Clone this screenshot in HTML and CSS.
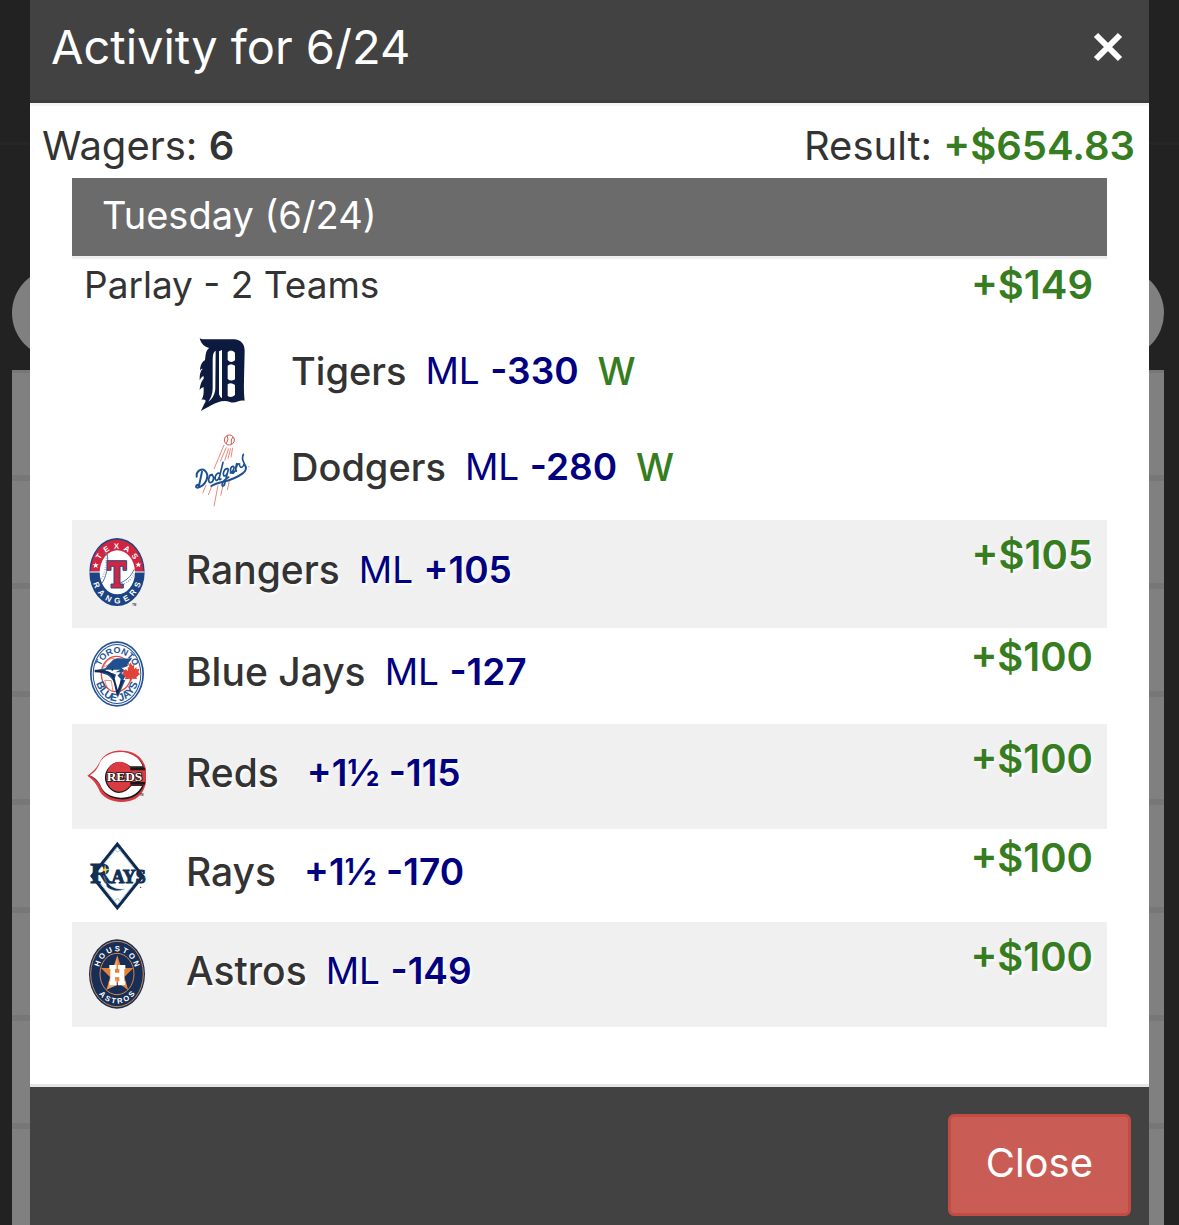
FILE: index.html
```html
<!DOCTYPE html>
<html lang="en">
<head>
<meta charset="utf-8">
<meta name="viewport" content="width=device-width, initial-scale=1">
<title>Activity for 6/24</title>
<link rel="stylesheet" href="styles.css">
</head>
<body>
<div class="backdrop" aria-hidden="true">
  <div class="backdrop-bar"></div>
  <div class="backdrop-pill"></div>
  <div class="backdrop-list"></div>
</div>

<div class="modal" role="dialog" aria-labelledby="modal-title">
  <header class="modal-header">
    <h1 class="modal-title" id="modal-title">Activity for 6/24</h1>
    <button class="dismiss" type="button" aria-label="Dismiss">
      <svg viewBox="0 0 30 30" width="30" height="30"><path d="M3 3 27 27M27 3 3 27" stroke="#fff" stroke-width="6" fill="none"/></svg>
    </button>
  </header>

  <main class="modal-body">
    <div class="summary">
      <div>Wagers: <b>6</b></div>
      <div>Result: <b class="win">+$654.83</b></div>
    </div>

    <section class="day">
      <h2 class="day-title">Tuesday (6/24)</h2>
      <ul class="wagers">
        <li class="parlay">
          <div class="parlay-head"><span class="parlay-name">Parlay - 2 Teams</span><span class="amount">+$149</span></div>
          <ul class="legs">
            <li class="leg">
              <svg class="logo" viewBox="36 -12 180 270" width="60" height="90" role="img" aria-label="Tigers">
                <path fill="#0c1a40" fill-rule="evenodd" d="M59 24C66 30 74 27 84 28L164 28C184 30 194 44 194 62L192 150Q191 190 194 212C178 208 166 222 150 216C130 209 114 216 94 226L62 243C69 233 70 225 76 216C79 211 75 207 64 209C72 200 71 186 71 172C66 172 62 176 59 180C60 163 66 151 71 146V139C66 139 62 144 59 151C59 133 61 123 68 117C65 115 62 119 60 122C61 106 66 95 75 91C77 72 78 60 88 54C76 52 62 42 59 24ZM107 62C98 67 99 79 98 92V174C98 190 94 203 85 215C98 207 105 190 106 176ZM126 60L117 64V193Q120 202 126 205ZM143 66V90Q153 101 165 91V68Q153 56 143 66ZM143 107V147Q153 156 165 148V107Q153 98 143 107ZM143 163V198Q154 205 165 195V165Q153 156 143 163Z"/>
              </svg>
              <span class="team">Tigers</span><span class="bet">ML <b>-330</b></span><span class="outcome">W</span>
            </li>
            <li class="leg">
              <svg class="logo" viewBox="36 -9 180 270" width="60" height="90" role="img" aria-label="Dodgers">
                <g fill="none" stroke="#e88a7c" stroke-width="3">
                  <path d="M132 60 102 132M139 67 121 109M146 70 134 107M152 70 144 101M158 68 153 97M78 180 68 205M96 181 85 210M114 181 102 244M130 177 122 212M148 166 142 195"/>
                  <circle cx="148" cy="45" r="15" fill="#fff" stroke="#d85048"/>
                  <path d="M141 32Q148 42 139 56M159 36Q151 43 154 57" stroke="#d85048"/>
                </g>
                <g fill="none" stroke="#1d5091" stroke-linecap="round" stroke-linejoin="round">
                  <path stroke-width="6" d="M66 140 56 187M50 155C48 137 66 129 75 137C91 152 77 182 53 188C46 188 47 180 54 179"/>
                  <path stroke-width="5" d="M97 149C86 147 82 172 91 173C102 172 104 151 95 151M119 145C106 140 101 167 110 166C115 165 119 154 121 145L129 112M121 145Q114 170 123 162M143 131C131 129 126 153 134 153C142 151 145 133 145 133L133 180C125 191 119 172 146 156M151 144C163 139 165 122 158 124C149 128 149 150 161 143L167 136M170 116Q165 132 169 138M169 128Q172 114 179 117M190 88Q184 100 193 116C190 128 181 130 179 122"/>
                  <path stroke-width="6" d="M94 183C120 166 149 174 188 145C198 139 201 128 194 119"/>
                </g>
                <circle cx="207" cy="125" r="2" fill="#8795aa"/>
              </svg>
              <span class="team">Dodgers</span><span class="bet">ML <b>-280</b></span><span class="outcome">W</span>
            </li>
          </ul>
        </li>
        <li class="wager striped">
          <svg class="logo" viewBox="36 30 180 234" width="60" height="78" role="img" aria-label="Rangers">
            <defs>
              <path id="texas-arc" d="M66 141A60 70 0 0 1 186 141"/>
              <path id="rangers-arc" d="M49 141A77 94 0 0 0 203 141"/>
            </defs>
            <ellipse cx="126" cy="141" rx="83" ry="102" fill="#1c4484"/>
            <path d="M47 140C48 84 83 44 126 44S204 84 205 140Z" fill="#cf2541"/>
            <path d="M43 141H209" stroke="#fff" stroke-width="3"/>
            <ellipse cx="127" cy="142" rx="53" ry="66" fill="#fff"/>
            <path d="M96 84C104 123 90 163 81 174M129 176C154 169 168 153 178 133" fill="none" stroke="#53719e" stroke-width="3"/>
            <path d="M92 84C98 119 88 148 78 163M135 182C158 173 169 164 178 146" fill="none" stroke="#8295b8" stroke-width="5" stroke-dasharray="2 5"/>
            <path d="M96 107H155V136H144V124H135V177H145V189H108V177H117V124H108V136H96Z" fill="#ce2743" stroke="#234a83" stroke-width="3"/>
            <path d="m62 112 2 6h7l-5 4 2 7-6-4-6 4 2-7-5-4h7zM190 110l2 6h7l-5 4 2 7-6-4-6 4 2-7-5-4h7z" fill="#fff"/>
            <g class="crest-text">
              <text font-size="23"><textPath href="#texas-arc" startOffset="50%" text-anchor="middle">T&nbsp;&nbsp;E&nbsp;&nbsp;X&nbsp;&nbsp;A&nbsp;&nbsp;S</textPath></text>
              <text font-size="24"><textPath href="#rangers-arc" startOffset="50%" text-anchor="middle">R&nbsp;&nbsp;A&nbsp;&nbsp;N&nbsp;&nbsp;G&nbsp;&nbsp;E&nbsp;&nbsp;R&nbsp;&nbsp;S</textPath></text>
            </g>
            <text class="mark" x="172" y="242">TM</text>
          </svg>
          <span class="team">Rangers</span><span class="bet">ML <b>+105</b></span><span class="amount">+$105</span>
        </li>
        <li class="wager">
          <svg class="logo" viewBox="36 21 180 234" width="60" height="78" role="img" aria-label="Blue Jays">
            <defs>
              <path id="toronto-arc" d="M73 132A53 62 0 0 1 179 132"/>
              <path id="jays-arc" d="M60 132A66 82 0 0 0 192 132"/>
            </defs>
            <ellipse cx="126" cy="132" rx="81" ry="98" fill="#245396"/>
            <ellipse cx="126" cy="132" rx="76" ry="93" fill="#fff"/>
            <ellipse cx="126" cy="132" rx="73" ry="90" fill="#245396"/>
            <ellipse cx="126" cy="132" rx="70" ry="87" fill="#fff"/>
            <ellipse cx="124" cy="132" rx="45" ry="53" fill="none" stroke="#df5148" stroke-width="4"/>
            <path d="M85 112Q98 82 118 85L102 103ZM89 151Q93 175 114 185L109 152Z" fill="#fff" stroke="#df5148" stroke-width="2"/>
            <path d="M58 121 91 115C99 103 108 99 114 91C128 77 142 91 171 83C166 96 155 98 159 107C150 111 147 113 139 113L151 122L139 129L151 139L145 150H151L128 204L119 161Q107 136 87 132Z" fill="#20518f"/>
            <path d="M94 119H136L121 127H137L127 137C119 128 101 128 87 126Z" fill="#fff"/>
            <path d="M59 123 90 125Q107 127 116 142L127 188L142 151" fill="none" stroke="#142a50" stroke-width="7"/>
            <path d="M124 133 137 147 134 161 128 179 119 145Z" fill="#fff"/>
            <circle cx="112" cy="119" r="3" fill="#12264b"/>
            <path d="m166 97 6 10 6-3-1 14 7-7 1 7 8-1-3 10 5 5-11 10 2 5-15-1-3 11-4-11-15 2 3-7-12-8 5-4-2-9 7 1 2-4 7 7-1-14 5 3z" fill="#df4438"/>
            <g class="crest-text blue">
              <text font-size="27"><textPath href="#toronto-arc" startOffset="50%" text-anchor="middle">TORONTO</textPath></text>
              <text font-size="32"><textPath href="#jays-arc" startOffset="50%" text-anchor="middle">BLUE JAYS</textPath></text>
            </g>
          </svg>
          <span class="team">Blue Jays</span><span class="bet">ML <b>-127</b></span><span class="amount">+$100</span>
        </li>
        <li class="wager striped">
          <svg class="logo" viewBox="36 12 180 225" width="60" height="75" role="img" aria-label="Reds">
            <path d="M37 122Q61 107 72 85C90 45 134 40 170 52Q204 65 213 102V143Q203 188 164 198C125 208 82 194 70 160Q60 138 37 122Z" fill="#d83b42"/>
            <path d="M46 122Q72 107 79 84C96 52 139 47 167 59Q197 69 207 98H166Q124 69 101 103C83 132 101 168 131 170Q151 171 167 151H207C193 184 166 195 135 193C106 191 85 178 76 151Q66 133 46 122Z" fill="#171717"/>
            <path d="M45 121Q68 106 75 82C94 51 137 46 164 56Q192 65 203 94H166Q125 66 99 100C78 128 95 169 131 174Q152 174 169 153H201C186 180 163 189 136 188C106 187 84 174 75 148Q65 130 45 121Z" fill="#fff"/>
            <ellipse cx="134" cy="123" rx="39" ry="43" fill="#d83b42"/>
            <path d="M166 98H210V106H166ZM166 141H210V149H166Z" fill="#171717"/>
            <text class="reds-word" x="95" y="138">REDS</text>
            <text class="mark" x="194" y="184">TM</text>
          </svg>
          <span class="team">Reds</span><span class="bet spread"><b>+1½ -115</b></span><span class="amount">+$100</span>
        </li>
        <li class="wager">
          <svg class="logo" viewBox="36 18 180 225" width="60" height="75" role="img" aria-label="Rays">
            <path d="M127 29 209 132 127 235 45 132Z" fill="#10294c"/>
            <path d="M127 45 196 132 127 219 58 132Z" fill="#fff" stroke="#a3c8e6" stroke-width="3"/>
            <path d="M120 51Q127 68 135 52M119 208Q127 191 136 208" fill="none" stroke="#a3c8e6" stroke-width="3"/>
            <text class="rays-word" x="46" y="153"><tspan font-size="88">R</tspan><tspan font-size="54">AYS</tspan></text>
            <path d="M86 131Q103 176 149 171Q120 184 96 165Z" fill="#122f54" stroke="#a3c8e6"/>
            <path d="m90 97 3 13 12 1-11 5-1 13-4-12-11-3 10-4z" fill="#f5d454"/>
            <circle cx="197" cy="166" r="2" fill="#10294c"/>
          </svg>
          <span class="team">Rays</span><span class="bet spread"><b>+1½ -170</b></span><span class="amount">+$100</span>
        </li>
        <li class="wager striped">
          <svg class="logo" viewBox="36 21 180 225" width="60" height="75" role="img" aria-label="Astros">
            <defs>
              <path id="houston-arc" d="M70 132A56 68 0 0 1 182 132"/>
              <path id="astros-arc" d="M53 132A73 89 0 0 0 199 132"/>
            </defs>
            <ellipse cx="126" cy="132" rx="84" ry="104" fill="#172e56"/>
            <ellipse cx="126" cy="132" rx="79" ry="98" fill="none" stroke="#c98852" stroke-width="3"/>
            <ellipse cx="126" cy="132" rx="51" ry="62" fill="none" stroke="#d68549" stroke-width="3"/>
            <path d="m127 76 12 38h36l-27 27 12 40-33-24-33 24 11-40-27-27h36z" fill="#e58235"/>
            <path d="M127 80V114H117ZM127 148V165L97 178 108 145Z" fill="#f0a363"/>
            <path d="M103 105H124V117H120V128H133V117H129V105H151V117H148V154H151V166H129V154H133V142H120V154H124V166H103V154H106V117H103Z" fill="#fff"/>
            <g class="crest-text">
              <text font-size="23"><textPath href="#houston-arc" startOffset="50%" text-anchor="middle">H&nbsp;O&nbsp;U&nbsp;S&nbsp;T&nbsp;O&nbsp;N</textPath></text>
              <text font-size="23"><textPath href="#astros-arc" startOffset="50%" text-anchor="middle">A&nbsp;S&nbsp;T&nbsp;R&nbsp;O&nbsp;S</textPath></text>
            </g>
          </svg>
          <span class="team">Astros</span><span class="bet">ML <b>-149</b></span><span class="amount">+$100</span>
        </li>
      </ul>
    </section>
  </main>

  <footer class="modal-footer">
    <button class="close" type="button">Close</button>
  </footer>
</div>
</body>
</html>
```
FILE: styles.css
```css
* {
  box-sizing: border-box;
}

body {
  position: relative;
  min-height: 100vh;
  margin: 0;
  background: #222;
  color: #333;
  font-family: Inter, "Liberation Sans", sans-serif;
  font-size: 40px;
  line-height: 40px;
}

h1,
h2,
ul {
  margin: 0;
  padding: 0;
  font-weight: 400;
  list-style: none;
}

b {
  font-weight: 600;
}

button {
  font: inherit;
  cursor: pointer;
}

/* Dimmed page behind the dialog */
.backdrop {
  position: absolute;
  inset: 0;
  z-index: -1;
  display: flex;
  flex-direction: column;
  overflow: hidden;
}

.backdrop-bar {
  height: 145px;
  border-bottom: 3px solid #262626;
}

.backdrop-pill {
  height: 90px;
  margin: 123px 15px 12px 12px;
  border-radius: 45px;
  background: #808080;
}

.backdrop-list {
  flex: 1;
  margin: 0 15px 0 12px;
  background: repeating-linear-gradient(#777 0 3px, #808080 3px 105px, #777 105px 108px);
}

/* Dialog */
.modal {
  display: flex;
  flex-direction: column;
  min-height: 100vh;
  margin: 0 30px;
  background: #fff;
}

.modal-header {
  display: flex;
  align-items: center;
  justify-content: space-between;
  padding: 20px 26px 27px 21px;
  border-bottom: 3px solid #3c3c3c;
  background: #424242;
  color: #fff;
}

.modal-title {
  font-size: 47px;
  line-height: 53px;
}

.dismiss {
  display: flex;
  padding: 0;
  border: 0;
  background: none;
}

.modal-body {
  flex: 1;
  padding: 17px 12px 57px;
  border-top: 3px solid #f5f5f5;
}

.summary {
  display: flex;
  justify-content: space-between;
  padding: 0 2px 10px 0;
  line-height: 45px;
}

.win,
.amount,
.outcome {
  color: #367d22;
}

.day {
  margin: 0 30px;
}

.day-title {
  padding: 16px 30px 20px;
  border-bottom: 3px solid #eee;
  background: #6b6b6b;
  background-clip: padding-box;
  color: #fff;
  font-size: 38px;
  line-height: 42px;
}

.team,
.outcome {
  font-weight: 500;
}

.amount {
  margin-left: auto;
  font-size: 40px;
  font-weight: 600;
}

.bet {
  margin-left: 19px;
  color: #000080;
  font-size: 37px;
}

.spread {
  margin-left: 28px;
}

.outcome {
  margin-left: 19px;
}

.logo {
  flex: none;
  margin-right: 39px;
  text-shadow: none;
}

.parlay {
  padding-bottom: 5px;
}

.parlay-head {
  display: flex;
  padding: 6px 14px 18px 12px;
}

.parlay-name {
  font-size: 37px;
}

.leg {
  display: flex;
  align-items: center;
  height: 96px;
  padding-left: 120px;
  font-size: 38px;
}

.wager {
  display: flex;
  align-items: center;
  padding: 9px 14px 9px 15px;
  font-size: 39px;
}

.wager .team,
.wager .bet {
  padding-bottom: 8px;
}

.wager .amount {
  align-self: flex-start;
}

.striped {
  padding-top: 15px;
  padding-bottom: 15px;
  background: #f0f0f0;
  text-shadow: 2px 2px 2px #fff;
}

.modal-footer {
  display: flex;
  justify-content: flex-end;
  padding: 27px 18px 9px;
  border-top: 3px solid #e5e5e5;
  background: #424242;
  background-clip: padding-box;
}

.close {
  padding: 25px 35px 29px;
  border: 3px solid #c24b43;
  border-radius: 6px;
  background: #c95c54;
  color: #fff;
  line-height: 42px;
}

/* Lettering inside the team crests */
.crest-text {
  fill: #fff;
  font-family: "Liberation Sans", sans-serif;
  font-weight: 700;
}

.blue {
  fill: #245396;
}

.mark {
  fill: #333;
  font: 700 8px "Liberation Sans", sans-serif;
}

.reds-word {
  fill: #fff;
  stroke: #171717;
  stroke-width: 5px;
  paint-order: stroke;
  font: 700 40px "Liberation Serif", serif;
}

.rays-word {
  fill: #122f54;
  stroke: #122f54;
  stroke-width: 3px;
  font-family: "Liberation Serif", serif;
  font-weight: 700;
}
```
